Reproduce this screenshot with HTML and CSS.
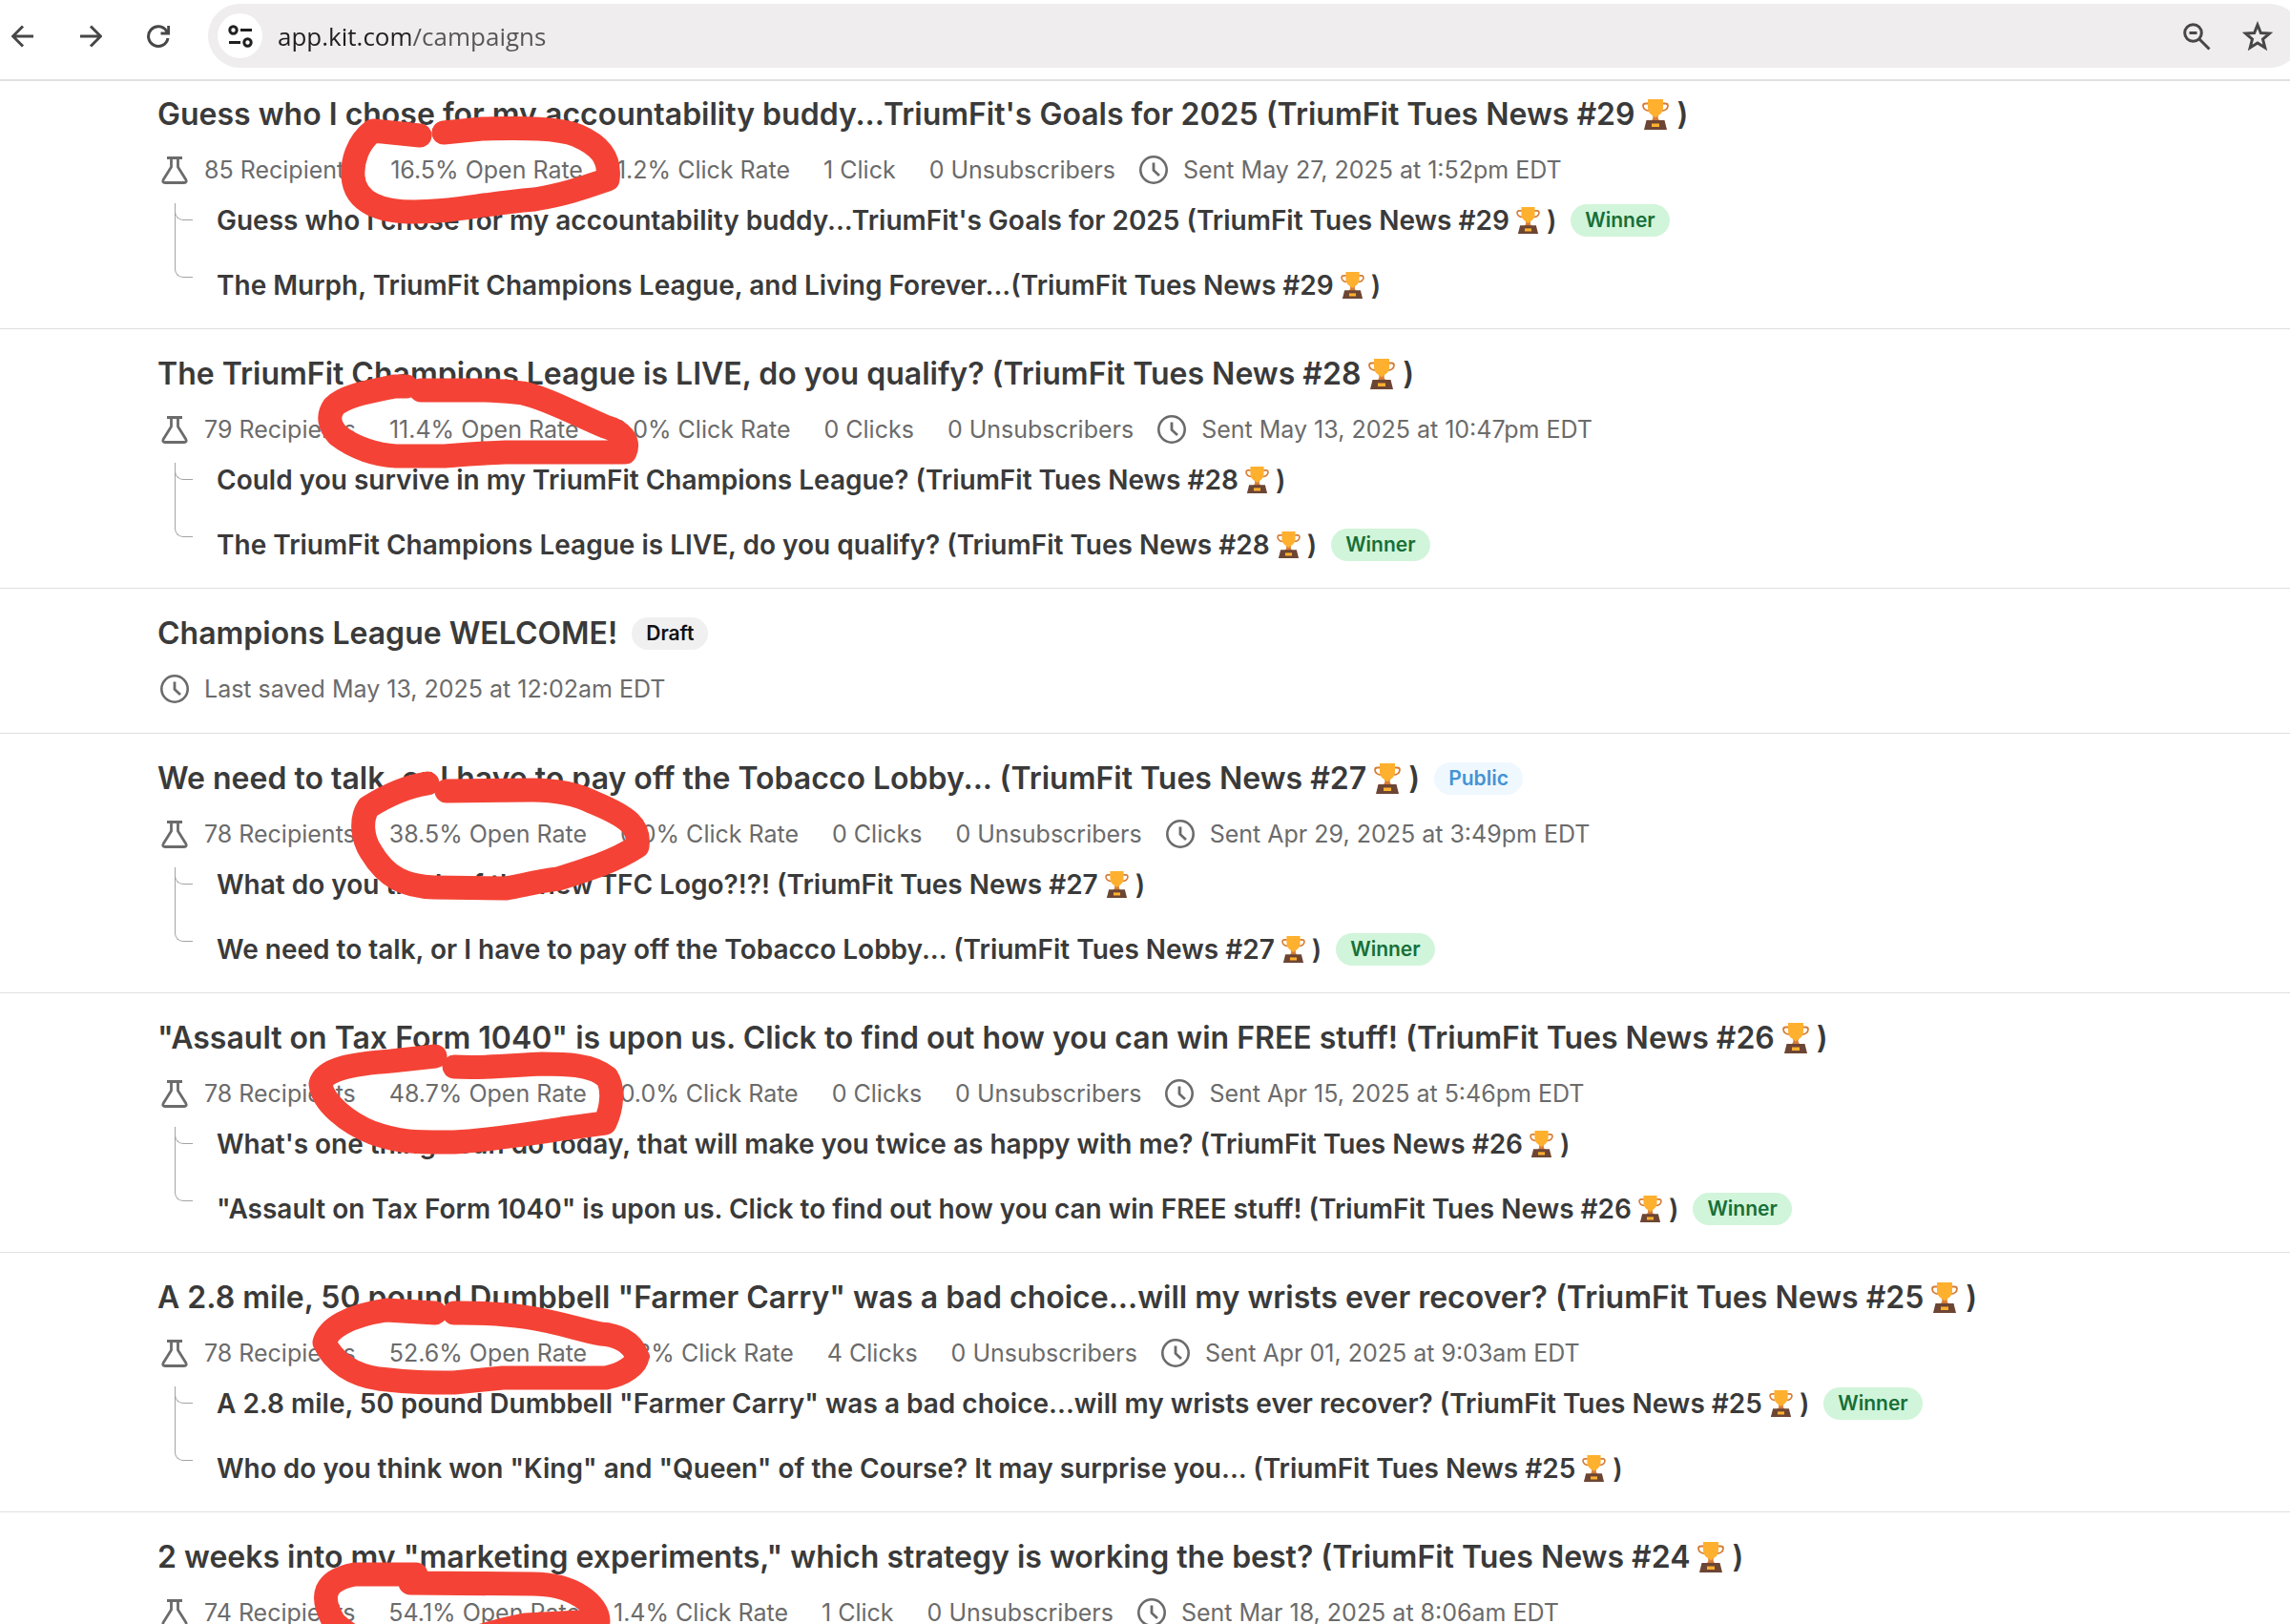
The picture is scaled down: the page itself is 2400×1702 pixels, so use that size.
FILE: index.html
```html
<!DOCTYPE html>
<html lang="en">
<head>
<meta charset="utf-8">
<title>Campaigns</title>
<link rel="stylesheet" href="styles.css">
</head>
<body>
<svg class="sprite" aria-hidden="true">
  <symbol id="flask" viewBox="0 0 36 36">
    <path d="M10 5.500H26M14.500 5.500V15L6.200 28.200Q4.800 31.500 8 31.500H28Q31.200 31.500 29.800 28.200L21.500 15V5.500" fill="none" stroke="#6b6b6b" stroke-width="2.800" stroke-linejoin="round"/>
  </symbol>
  <symbol id="clock" viewBox="0 0 36 36">
    <circle cx="18" cy="18" r="13.700" fill="none" stroke="#6b6b6b" stroke-width="2.600"/>
    <path d="M18 10.500V18.500L24 24" fill="none" stroke="#6b6b6b" stroke-width="2.800"/>
  </symbol>
  <symbol id="trophy" viewBox="0 0 44 34">
    <path d="M14.500 5.500H11.500Q9 5.500 9 8Q9.500 13 16 13M29.500 5.500H32.500Q35 5.500 35 8Q34.500 13 28 13" fill="none" stroke="#d67d36" stroke-width="1.800"/>
    <path d="M19 18H25Q23.500 21 27 24H17Q20.500 21 19 18Z" fill="#d67d36"/>
    <path d="M14 1H30V10Q30 15 25 18L22 20.500L19 18Q14 15 14 10Z" fill="#ffb02e"/>
    <path d="M12.500 23H31.500L34 33H10Z" fill="#6d4534"/>
    <rect x="18" y="26.500" width="8" height="3.500" fill="#ffb02e"/>
  </symbol>
</svg>
<div class="window">
  <header class="toolbar">
    <nav class="nav" aria-label="Browser">
      <button class="nav-button" aria-label="Back"><svg viewBox="0 0 24 24"><path d="M23 12H2M12 1.500L1.500 12L12 22.500"/></svg></button>
      <button class="nav-button" aria-label="Forward"><svg viewBox="0 0 24 24"><path d="M1 12H22M12 1.500L22.500 12L12 22.500"/></svg></button>
      <button class="nav-button" aria-label="Reload"><svg viewBox="0 0 24 24"><path d="M22 14A10.300 10.300 0 1 1 20.500 6.500L22.500 9M22.700 1V9H14.500"/></svg></button>
    </nav>
    <div class="address">
      <button class="site-info" aria-label="Site information"><svg viewBox="0 0 26 26"><circle cx="5.500" cy="6.500" r="3.700"/><path d="M13 6.500H25M1 19.500H13"/><circle cx="20.500" cy="19.500" r="3.700"/></svg></button>
      <input class="url" type="text" aria-label="Address" value="app.kit.com/campaigns">
      <button class="address-button" aria-label="Zoom"><svg viewBox="0 0 32 32"><circle cx="12.500" cy="12.500" r="8.800"/><path d="M19 19L29.500 29.500M8.500 12.500H16.500"/></svg></button>
      <button class="address-button" aria-label="Bookmark"><svg viewBox="0 0 32 32"><path d="M16 4L19.400 12.500L28.500 13.100L21.500 19L23.800 28L16 23L8.200 28L10.500 19L3.500 13.100L12.600 12.500Z"/></svg></button>
    </div>
  </header>

  <main class="content">
    <ul class="campaigns">
      <li class="campaign">
        <h2 class="title"><a href="#c29">Guess who I chose for my accountability buddy...TriumFit's Goals for 2025 (TriumFit Tues News #29<svg class="trophy"><use href="#trophy"/></svg>)</a></h2>
        <div class="meta"><svg class="icon"><use href="#flask"/></svg><span class="stats"><span>85 Recipients</span><span>16.5% Open Rate</span><span>1.2% Click Rate</span><span>1 Click</span><span>0 Unsubscribers</span></span><svg class="icon"><use href="#clock"/></svg><span>Sent May 27, 2025 at 1:52pm EDT</span></div>
        <ul class="variants">
          <li class="variant"><a href="#c29a">Guess who I chose for my accountability buddy...TriumFit's Goals for 2025 (TriumFit Tues News #29<svg class="trophy"><use href="#trophy"/></svg>)</a><span class="badge winner">Winner</span></li>
          <li class="variant"><a href="#c29b">The Murph, TriumFit Champions League, and Living Forever...(TriumFit Tues News #29<svg class="trophy"><use href="#trophy"/></svg>)</a></li>
        </ul>
      </li>
      <li class="campaign">
        <h2 class="title"><a href="#c28">The TriumFit Champions League is LIVE, do you qualify? (TriumFit Tues News #28<svg class="trophy"><use href="#trophy"/></svg>)</a></h2>
        <div class="meta"><svg class="icon"><use href="#flask"/></svg><span class="stats"><span>79 Recipients</span><span>11.4% Open Rate</span><span>0.0% Click Rate</span><span>0 Clicks</span><span>0 Unsubscribers</span></span><svg class="icon"><use href="#clock"/></svg><span>Sent May 13, 2025 at 10:47pm EDT</span></div>
        <ul class="variants">
          <li class="variant"><a href="#c28a">Could you survive in my TriumFit Champions League? (TriumFit Tues News #28<svg class="trophy"><use href="#trophy"/></svg>)</a></li>
          <li class="variant"><a href="#c28b">The TriumFit Champions League is LIVE, do you qualify? (TriumFit Tues News #28<svg class="trophy"><use href="#trophy"/></svg>)</a><span class="badge winner">Winner</span></li>
        </ul>
      </li>
      <li class="campaign">
        <h2 class="title"><a href="#welcome">Champions League WELCOME!</a><span class="badge draft">Draft</span></h2>
        <div class="meta"><svg class="icon"><use href="#clock"/></svg><span>Last saved May 13, 2025 at 12:02am EDT</span></div>
      </li>
      <li class="campaign">
        <h2 class="title"><a href="#c27">We need to talk, or I have to pay off the Tobacco Lobby... (TriumFit Tues News #27<svg class="trophy"><use href="#trophy"/></svg>)</a><span class="badge public">Public</span></h2>
        <div class="meta"><svg class="icon"><use href="#flask"/></svg><span class="stats"><span>78 Recipients</span><span>38.5% Open Rate</span><span>0.0% Click Rate</span><span>0 Clicks</span><span>0 Unsubscribers</span></span><svg class="icon"><use href="#clock"/></svg><span>Sent Apr 29, 2025 at 3:49pm EDT</span></div>
        <ul class="variants">
          <li class="variant"><a href="#c27a">What do you think of the new TFC Logo?!?! (TriumFit Tues News #27<svg class="trophy"><use href="#trophy"/></svg>)</a></li>
          <li class="variant"><a href="#c27b">We need to talk, or I have to pay off the Tobacco Lobby... (TriumFit Tues News #27<svg class="trophy"><use href="#trophy"/></svg>)</a><span class="badge winner">Winner</span></li>
        </ul>
      </li>
      <li class="campaign">
        <h2 class="title"><a href="#c26">"Assault on Tax Form 1040" is upon us. Click to find out how you can win FREE stuff! (TriumFit Tues News #26<svg class="trophy"><use href="#trophy"/></svg>)</a></h2>
        <div class="meta"><svg class="icon"><use href="#flask"/></svg><span class="stats"><span>78 Recipients</span><span>48.7% Open Rate</span><span>0.0% Click Rate</span><span>0 Clicks</span><span>0 Unsubscribers</span></span><svg class="icon"><use href="#clock"/></svg><span>Sent Apr 15, 2025 at 5:46pm EDT</span></div>
        <ul class="variants">
          <li class="variant"><a href="#c26a">What's one thing I can do today, that will make you twice as happy with me? (TriumFit Tues News #26<svg class="trophy"><use href="#trophy"/></svg>)</a></li>
          <li class="variant"><a href="#c26b">"Assault on Tax Form 1040" is upon us. Click to find out how you can win FREE stuff! (TriumFit Tues News #26<svg class="trophy"><use href="#trophy"/></svg>)</a><span class="badge winner">Winner</span></li>
        </ul>
      </li>
      <li class="campaign">
        <h2 class="title"><a href="#c25">A 2.8 mile, 50 pound Dumbbell "Farmer Carry" was a bad choice...will my wrists ever recover? (TriumFit Tues News #25<svg class="trophy"><use href="#trophy"/></svg>)</a></h2>
        <div class="meta"><svg class="icon"><use href="#flask"/></svg><span class="stats"><span>78 Recipients</span><span>52.6% Open Rate</span><span>1.3% Click Rate</span><span>4 Clicks</span><span>0 Unsubscribers</span></span><svg class="icon"><use href="#clock"/></svg><span>Sent Apr 01, 2025 at 9:03am EDT</span></div>
        <ul class="variants">
          <li class="variant"><a href="#c25a">A 2.8 mile, 50 pound Dumbbell "Farmer Carry" was a bad choice...will my wrists ever recover? (TriumFit Tues News #25<svg class="trophy"><use href="#trophy"/></svg>)</a><span class="badge winner">Winner</span></li>
          <li class="variant"><a href="#c25b">Who do you think won "King" and "Queen" of the Course? It may surprise you... (TriumFit Tues News #25<svg class="trophy"><use href="#trophy"/></svg>)</a></li>
        </ul>
      </li>
      <li class="campaign">
        <h2 class="title"><a href="#c24">2 weeks into my "marketing experiments," which strategy is working the best? (TriumFit Tues News #24<svg class="trophy"><use href="#trophy"/></svg>)</a></h2>
        <div class="meta"><svg class="icon"><use href="#flask"/></svg><span class="stats"><span>74 Recipients</span><span>54.1% Open Rate</span><span>1.4% Click Rate</span><span>1 Click</span><span>0 Unsubscribers</span></span><svg class="icon"><use href="#clock"/></svg><span>Sent Mar 18, 2025 at 8:06am EDT</span></div>
      </li>
    </ul>
  </main>

  <!-- Hand-drawn marker rings around the open rates -->
  <svg class="marker" viewBox="0 0 760 1702" aria-hidden="true">
    <path d="M440 142L391 137C374 150 369 170 370 185C372 213 400 222 434 222C480 222 500 214 560 209C590 204 605 199 637 188C640 165 628 152 605 142C585 134 550 134 505 135L465 139"/>
    <path d="M426 405L413 405C390 410 362 414 350 426C343 436 345 446 354 456C372 470 395 477 415 478L466 478C490 476 500 475 530 474L655 474C660 462 652 452 634 447C605 435 575 418 548 412C520 408 500 409 441 409"/>
    <path d="M448 821C428 824 408 832 386 846C378 858 379 878 389 893C405 920 425 929 455 930L530 931C545 929 560 924 585 921C620 910 645 902 668 887C671 866 658 856 622 841C600 830 575 828 558 828L468 829"/>
    <path d="M456 1107L410 1112C370 1115 340 1120 336 1136C338 1156 365 1177 390 1187C420 1198 440 1197 476 1197C510 1195 545 1190 589 1183L634 1177C642 1160 643 1140 636 1129C620 1115 590 1115 568 1115C540 1116 510 1120 476 1118"/>
    <path d="M456 1376L405 1373C365 1379 344 1392 340 1407C350 1428 370 1441 397 1445C430 1449 450 1449 476 1449L527 1444L635 1444C655 1440 667 1430 668 1422C662 1405 645 1399 630 1398C590 1390 560 1375 476 1376"/>
    <path d="M436 1650L372 1650C340 1656 334 1672 350 1700C365 1715 390 1728 420 1730C470 1730 500 1712 550 1703L627 1699C627 1682 602 1660 558 1660L430 1659"/>
  </svg>
</div>
</body>
</html>
```
FILE: styles.css
```css
* { box-sizing: border-box; }
body {
  margin: 0;
  background: #fff;
  color: #3a3a3a;
  font-family: Inter, "Liberation Sans", sans-serif;
}
ul { list-style: none; margin: 0; padding: 0; }
a { color: inherit; text-decoration: none; }
button { border: 0; padding: 0; background: none; }
.sprite { position: absolute; width: 0; height: 0; }

.window {
  position: relative;
  display: flex;
  flex-direction: column;
  height: 100vh;
  overflow: hidden;
}

.toolbar {
  display: flex;
  align-items: center;
  gap: 40px;
  padding: 4px 0 12px 12px;
  border-bottom: 2px solid #e1e1e1;
}
.nav { display: flex; gap: 47px; }
.nav-button { display: flex; width: 24px; height: 24px; }
.nav-button svg {
  width: 24px;
  height: 24px;
  fill: none;
  stroke: #474747;
  stroke-width: 3;
}
.address {
  display: flex;
  flex: 1;
  align-items: center;
  gap: 32px;
  height: 67px;
  margin-right: -12px;
  padding: 0 30px 0 10px;
  border-radius: 34px;
  background: #efedee;
}
.site-info {
  display: flex;
  align-items: center;
  justify-content: center;
  width: 47px;
  height: 47px;
  border-radius: 50%;
  background: #fff;
}
.site-info svg { width: 26px; height: 26px; fill: none; stroke: #1f1f1f; stroke-width: 3; }
.url {
  flex: 1;
  min-width: 0;
  margin-left: -16px;
  padding: 0;
  border: 0;
  outline: 0;
  background: linear-gradient(90deg, #1f1f1f 139px, #555 139px);
  background-clip: text;
  color: transparent;
  font: 26px/40px "Open Sans", "Noto Sans", sans-serif;
}
.address-button { display: flex; }
.address-button svg { width: 32px; height: 32px; fill: none; stroke: #474747; stroke-width: 3; }

.content { flex: 1; min-height: 0; overflow: hidden; }
.campaign {
  min-height: 152px;
  padding: 27px 24px 27px 165px;
  border-bottom: 1px solid #dfdfdf;
}
.campaign:first-child { padding-top: 15px; }
.title {
  display: flex;
  align-items: center;
  gap: 15px;
  margin: 0;
  font-size: 32px;
  font-weight: 600;
  line-height: 40px;
  white-space: nowrap;
}
.trophy { width: 44px; height: 34px; vertical-align: -6px; }
.meta {
  display: flex;
  align-items: center;
  height: 36px;
  margin-top: 20px;
  color: #6b6b6b;
  font-size: 25px;
  line-height: 36px;
  white-space: nowrap;
}
.icon { width: 36px; height: 36px; margin-right: 13px; }
.stats { display: flex; gap: 35px; margin-right: 22px; }

.variants {
  position: relative;
  display: flex;
  flex-direction: column;
  gap: 32px;
  margin-top: 17px;
  padding-left: 62px;
}
.variants::before,
.variants::after {
  content: "";
  position: absolute;
  top: 0;
  left: 18px;
  width: 18px;
  height: 17px;
  border: solid #a3a3a3;
  border-width: 0 0 1px 1px;
  border-radius: 0 0 0 9px;
}
.variants::after { height: 77px; }
.variant {
  display: flex;
  align-items: center;
  gap: 15px;
  height: 36px;
  font-size: 28px;
  font-weight: 600;
  line-height: 36px;
  white-space: nowrap;
}
.variant .trophy { width: 39px; height: 30px; vertical-align: -5px; }

.badge {
  padding: 0 15px;
  border-radius: 17px;
  font-size: 21px;
  font-weight: 600;
  line-height: 34px;
}
.winner { background: #d1f5da; color: #176f38; }
.draft { background: #f0f0f0; color: #111; }
.public { background: #eff8ff; color: #4593d4; }

.marker {
  position: absolute;
  top: 0;
  left: 0;
  width: 760px;
  height: 1702px;
  fill: none;
  stroke: #f44336;
  stroke-width: 25;
  stroke-linecap: round;
  stroke-linejoin: round;
  pointer-events: none;
}
```
